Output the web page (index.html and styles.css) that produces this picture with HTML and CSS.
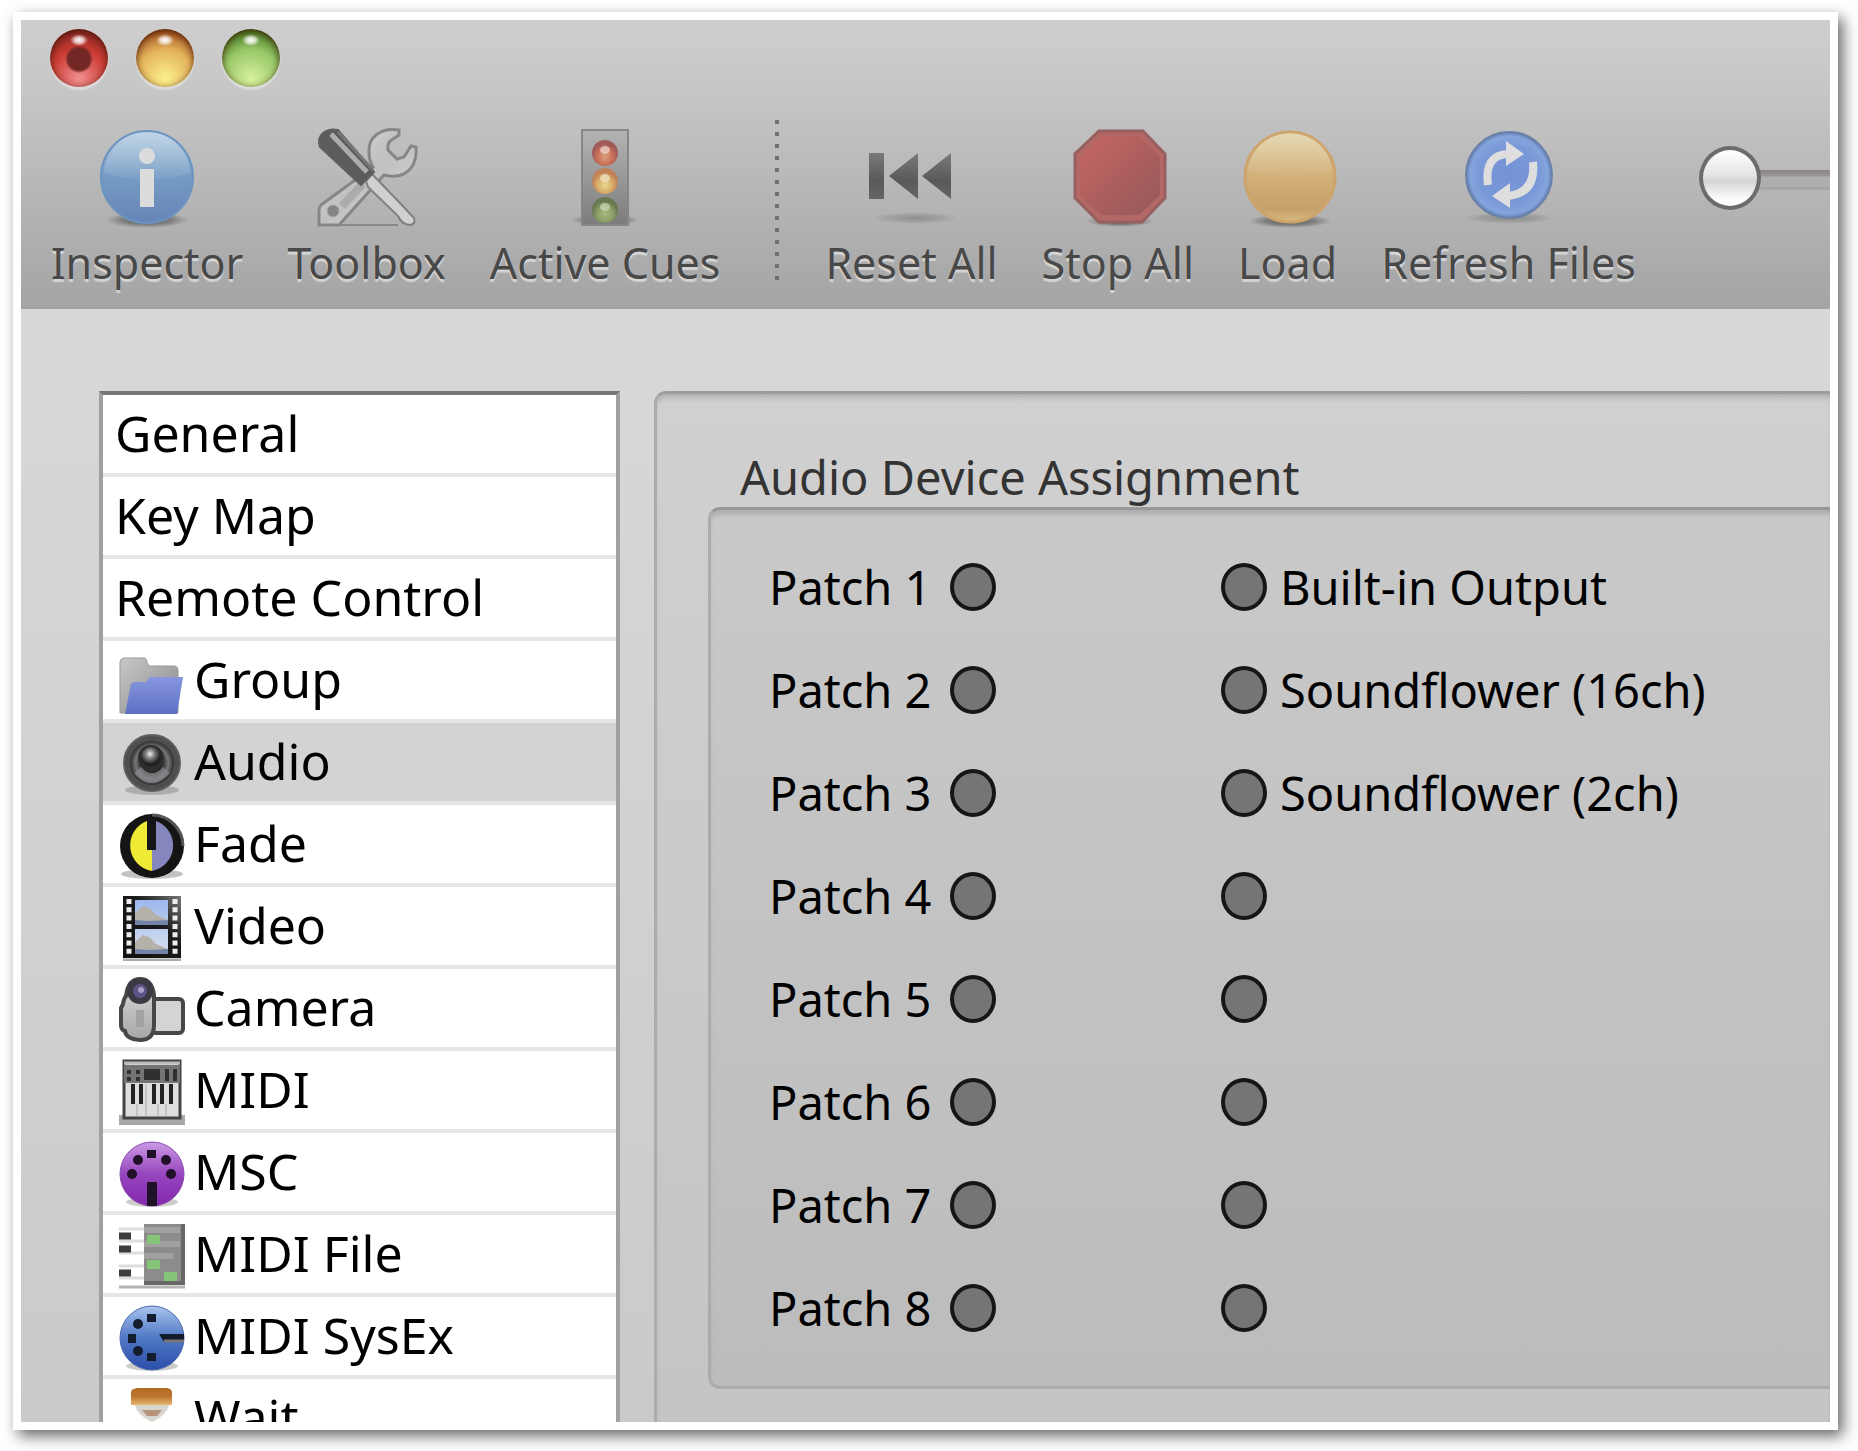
FILE: index.html
```
<!DOCTYPE html>
<html lang="en">
<head>
    <meta charset="UTF-8">
    <meta name="viewport" content="width=device-width, initial-scale=1.0">
    <title>Workspace Preferences</title>
    <link rel="stylesheet" href="styles.css">
</head>
<body>
    <div class="window">
        <header class="chrome">
            <!-- Window buttons -->
            <div class="lights">
                <button class="light red" aria-label="Close"></button>
                <button class="light yellow" aria-label="Minimize"></button>
                <button class="light green" aria-label="Zoom"></button>
            </div>

            <!-- Toolbar -->
            <div class="toolbar">
                <button class="tool">
                    <svg viewBox="0 0 98 98" aria-hidden="true">
                        <defs>
                            <linearGradient id="infoFill" x1="0" y1="0" x2="0" y2="1">
                                <stop offset="0" stop-color="#8fb2d4"/>
                                <stop offset=".5" stop-color="#759cc4"/>
                                <stop offset="1" stop-color="#6684b8"/>
                            </linearGradient>
                            <linearGradient id="gloss" x1="0" y1="0" x2="0" y2="1">
                                <stop offset="0" stop-color="#fff" stop-opacity=".45"/>
                                <stop offset="1" stop-color="#fff" stop-opacity=".05"/>
                            </linearGradient>
                            <radialGradient id="shade">
                                <stop offset="0" stop-color="#333" stop-opacity=".8"/>
                                <stop offset=".6" stop-color="#444" stop-opacity=".45"/>
                                <stop offset="1" stop-color="#555" stop-opacity="0"/>
                            </radialGradient>
                        </defs>
                        <ellipse cx="49" cy="91" rx="42" ry="8" fill="url(#shade)"/>
                        <circle cx="49" cy="48" r="46" fill="url(#infoFill)" stroke="#6c94c0" stroke-width="2"/>
                        <path d="M6 44a43 41 0 0 1 86 0q-43 12-86 0z" fill="url(#gloss)"/>
                        <circle cx="49" cy="27" r="8" fill="#dcdcdc"/>
                        <rect x="42" y="40" width="14" height="38" fill="#dcdcdc"/>
                    </svg>
                    <span>Inspector</span>
                </button>

                <button class="tool">
                    <svg viewBox="0 0 98 98" aria-hidden="true">
                        <defs>
                            <linearGradient id="steel" x1="0" y1="0" x2="1" y2="1">
                                <stop offset="0" stop-color="#dcdcdc"/>
                                <stop offset=".5" stop-color="#c0c0c0"/>
                                <stop offset="1" stop-color="#dadada"/>
                            </linearGradient>
                        </defs>
                        <path d="M20 96h60" stroke="#8a8a8a" stroke-width="2"/>
                        <path d="M81 1C63-2 50 8 51 23q0 9 4 15L3 76q-2 2-2 6v14h20l45-50q20 5 29-10 4-9 3-18l-5-1-7 11-7 2-9-9q-1-5 2-9l9-6z" fill="url(#steel)" stroke="#868686" stroke-width="3"/>
                        <path d="M45 55L24 77" fill="none" stroke="#a2a2a2" stroke-width="8" opacity=".7"/>
                        <circle cx="15" cy="82" r="6" fill="#858585" stroke="#aaa"/>
                        <path d="M48 52l6-7 28 29 14 15q2 5-3 7-9 0-13-9L50 58z" fill="#d0d0d0" stroke="#808080" stroke-width="2"/>
                        <path d="M2 18Q-1 9 5 4t15-3l36 42-13 13z" fill="#5c5c5c" stroke="#606060" stroke-width="2"/>
                        <path d="M13 5l36 38" stroke="#adadad" stroke-width="5"/>
                        <path d="M20 3l35 38" stroke="#777" stroke-width="3"/>
                    </svg>
                    <span>Toolbox</span>
                </button>

                <button class="tool">
                    <svg viewBox="0 0 98 98" aria-hidden="true">
                        <defs>
                            <linearGradient id="signal" x1="0" y1="0" x2="0" y2="1">
                                <stop offset="0" stop-color="#b4b4b4"/>
                                <stop offset="1" stop-color="#7c7c7c"/>
                            </linearGradient>
                            <radialGradient id="lampRed" cy=".65"><stop offset="0" stop-color="#dba07a"/><stop offset=".6" stop-color="#c87058"/><stop offset="1" stop-color="#a05a58"/></radialGradient>
                            <radialGradient id="lampAmber" cy=".65"><stop offset="0" stop-color="#e6d890"/><stop offset=".6" stop-color="#d8ac68"/><stop offset="1" stop-color="#c08058"/></radialGradient>
                            <radialGradient id="lampGreen" cy=".65"><stop offset="0" stop-color="#a8b87c"/><stop offset=".6" stop-color="#8ba068"/><stop offset="1" stop-color="#687850"/></radialGradient>
                        </defs>
                        <ellipse cx="49" cy="91" rx="34" ry="6" fill="url(#shade)"/>
                        <rect x="26" y="1" width="46" height="95" fill="url(#signal)" stroke="#868686" stroke-width="2"/>
                        <circle cx="49" cy="24" r="13" fill="url(#lampRed)"/>
                        <circle cx="49" cy="52" r="13" fill="url(#lampAmber)"/>
                        <circle cx="49" cy="81" r="13" fill="url(#lampGreen)"/>
                        <ellipse cx="49" cy="21" rx="5" ry="4" fill="#eddcd2" opacity=".7"/>
                        <ellipse cx="49" cy="49" rx="5" ry="4" fill="#f1e6c8" opacity=".7"/>
                        <ellipse cx="49" cy="78" rx="5" ry="4" fill="#dde2cc" opacity=".6"/>
                    </svg>
                    <span>Active Cues</span>
                </button>

                <div class="divider"></div>

                <button class="tool">
                    <svg viewBox="0 0 98 98" aria-hidden="true">
                        <defs>
                            <linearGradient id="rewind" x1="0" y1="0" x2="0" y2="1">
                                <stop offset="0" stop-color="#7a7a7a"/>
                                <stop offset=".6" stop-color="#595959"/>
                                <stop offset="1" stop-color="#666"/>
                            </linearGradient>
                        </defs>
                        <ellipse cx="53" cy="89" rx="44" ry="6" fill="url(#shade)" opacity=".35"/>
                        <path d="M7 24h15v46H7zM56 24v46L27 47zM89 24v46L60 47z" fill="url(#rewind)"/>
                    </svg>
                    <span>Reset All</span>
                </button>

                <button class="tool">
                    <svg viewBox="0 0 98 98" aria-hidden="true">
                        <defs>
                            <linearGradient id="stop" x1="0" y1="0" x2="1" y2="1">
                                <stop offset="0" stop-color="#c46664"/>
                                <stop offset=".45" stop-color="#b0605e"/>
                                <stop offset="1" stop-color="#94585a"/>
                            </linearGradient>
                        </defs>
                        <ellipse cx="51" cy="92" rx="34" ry="6" fill="url(#shade)"/>
                        <path d="M30 2h44l22 23v44L73 93H30L6 69V25z" fill="#b46866" stroke="#97605f" stroke-width="3"/>
                        <path d="M32 7h38l21 21v38L70 86H32L11 66V28z" fill="url(#stop)"/>
                    </svg>
                    <span>Stop All</span>
                </button>

                <button class="tool">
                    <svg viewBox="0 0 98 98" aria-hidden="true">
                        <defs>
                            <linearGradient id="loadFill" x1="0" y1="0" x2="0" y2="1">
                                <stop offset="0" stop-color="#dacb96"/>
                                <stop offset=".5" stop-color="#d2b078"/>
                                <stop offset=".85" stop-color="#c6a06c"/>
                                <stop offset="1" stop-color="#d6bc80"/>
                            </linearGradient>
                        </defs>
                        <ellipse cx="51" cy="92" rx="42" ry="7" fill="url(#shade)"/>
                        <circle cx="51" cy="48" r="45" fill="url(#loadFill)" stroke="#cda46c" stroke-width="3"/>
                        <path d="M9 42a42 38 0 0 1 84 0q-42 10-84 0z" fill="url(#gloss)" opacity=".6"/>
                    </svg>
                    <span>Load</span>
                </button>

                <button class="tool">
                    <svg viewBox="0 0 98 98" aria-hidden="true">
                        <defs>
                            <radialGradient id="refreshFill">
                                <stop offset="0" stop-color="#7592d6"/>
                                <stop offset=".7" stop-color="#7a99d8"/>
                                <stop offset=".9" stop-color="#84a4dc"/>
                                <stop offset="1" stop-color="#6380b4"/>
                            </radialGradient>
                        </defs>
                        <ellipse cx="50" cy="89" rx="46" ry="6" fill="url(#shade)" opacity=".4"/>
                        <circle cx="50" cy="46" r="43" fill="url(#refreshFill)" stroke="#6a80a8" stroke-width="2"/>
                        <path d="M29 56Q25 26 49 25M74 33Q77 64 49 67" fill="none" stroke="#dedede" stroke-width="8"/>
                        <path d="M47 12l18 13-18 12zM51 54v25L33 67z" fill="#dedede"/>
                    </svg>
                    <span>Refresh Files</span>
                </button>

                <input class="slider" type="range" min="0" max="100" value="0" aria-label="Size">
            </div>
        </header>

        <main class="content">
            <!-- Cue type list -->
            <nav class="sidebar">
                <a href="#">General</a>
                <a href="#">Key Map</a>
                <a href="#">Remote Control</a>
                <a href="#">
                    <svg viewBox="0 0 66 66" aria-hidden="true">
                        <defs>
                            <linearGradient id="folderBack" x1="0" y1="0" x2="1" y2="1"><stop offset="0" stop-color="#c8c8c8"/><stop offset="1" stop-color="#888"/></linearGradient>
                            <linearGradient id="folderFront" x1="0" y1="0" x2="0" y2="1"><stop offset="0" stop-color="#8796de"/><stop offset="1" stop-color="#5e70c4"/></linearGradient>
                        </defs>
                        <path d="M1 64V13q0-3 4-4h20q3 0 3 5l2 3h26q3 1 3 4v43z" fill="url(#folderBack)" stroke="#999"/>
                        <path d="M6 65l6-30q1-2 5-2h10l4-5h33l-6 37z" fill="url(#folderFront)"/>
                    </svg>
                    <span>Group</span>
                </a>
                <a href="#" class="selected" aria-current="page">
                    <svg viewBox="0 0 66 66" aria-hidden="true">
                        <defs>
                            <radialGradient id="cone"><stop offset="0" stop-color="#666"/><stop offset=".45" stop-color="#222"/><stop offset=".75" stop-color="#777"/><stop offset="1" stop-color="#2c2c2c"/></radialGradient>
                            <radialGradient id="dome" cx=".45" cy=".35"><stop offset="0" stop-color="#eee"/><stop offset=".5" stop-color="#777"/><stop offset="1" stop-color="#222"/></radialGradient>
                        </defs>
                        <ellipse cx="33" cy="59" rx="27" ry="5" fill="#888" opacity=".5"/>
                        <circle cx="33" cy="32" r="28" fill="#4e4e4e" stroke="#5e5e5e" stroke-width="2"/>
                        <circle cx="33" cy="32" r="22" fill="url(#cone)"/>
                        <path d="M15 42q17 20 36 0l-7-6q-11 12-22 0z" fill="#8a8c90" opacity=".7"/>
                        <circle cx="32" cy="27" r="13" fill="#2e2e2e"/>
                        <circle cx="32" cy="26" r="10" fill="url(#dome)"/>
                    </svg>
                    <span>Audio</span>
                </a>
                <a href="#">
                    <svg viewBox="0 0 66 66" aria-hidden="true">
                        <ellipse cx="33" cy="61" rx="31" ry="5" fill="#999" opacity=".6"/>
                        <circle cx="33" cy="33" r="32" fill="#151515"/>
                        <path d="M33 2a31 31 0 0 1 31 31" fill="none" stroke="#555" stroke-width="3"/>
                        <path d="M33 58A26 26 0 0 1 28 8v29h5z" fill="#eeea35"/>
                        <path d="M33 58A26 26 0 0 0 37 8v29h-4z" fill="#8686be"/>
                    </svg>
                    <span>Fade</span>
                </a>
                <a href="#">
                    <svg viewBox="0 0 66 66" aria-hidden="true">
                        <defs>
                            <linearGradient id="film" x1="0" y1="1" x2="1" y2="0"><stop offset="0" stop-color="#111"/><stop offset=".6" stop-color="#1a1a1a"/><stop offset="1" stop-color="#777"/></linearGradient>
                            <linearGradient id="sky" x1="0" y1="0" x2="0" y2="1"><stop offset="0" stop-color="#9db8ee"/><stop offset="1" stop-color="#d8e0ee"/></linearGradient>
                        </defs>
                        <path d="M4 65h58" stroke="#aaa" stroke-width="3"/>
                        <rect x="4" y="1" width="58" height="62" fill="url(#film)"/>
                        <path d="M10 4v58M56 4v58" stroke="#eee" stroke-width="5" stroke-dasharray="5 3.3"/>
                        <path d="M16 5h33v25H16zM16 34h33v25H16z" fill="url(#sky)"/>
                        <path d="M16 24V18l8-7 6 2 7 7 12 5v2H16zM16 53V47l8-7 6 2 7 7 12 5v2H16z" fill="#b4b2a8"/>
                        <path d="M16 25l14 1 19-1v5H16zM16 54l14 1 19-1v5H16z" fill="#7484a8"/>
                    </svg>
                    <span>Video</span>
                </a>
                <a href="#">
                    <svg viewBox="0 0 66 66" aria-hidden="true">
                        <defs>
                            <linearGradient id="camBody" x1="0" y1="0" x2="0" y2="1"><stop offset="0" stop-color="#dadada"/><stop offset="1" stop-color="#a6a6a6"/></linearGradient>
                        </defs>
                        <rect x="33" y="22" width="31" height="34" rx="4" fill="#d4d4d4" stroke="#474747" stroke-width="4"/>
                        <path d="M4 27q1-6 3-8 2-17 14-17t14 16v30q0 15-14 15-14-1-15-9-4-1-4-6V31z" fill="url(#camBody)" stroke="#474747" stroke-width="4"/>
                        <circle cx="21" cy="14" r="13" fill="#3b3a42"/>
                        <circle cx="21" cy="14" r="7" fill="#5c5285"/>
                        <circle cx="22" cy="13" r="3" fill="#a89cc8"/>
                        <rect x="17" y="33" width="8" height="17" fill="#a2a2a2"/>
                    </svg>
                    <span>Camera</span>
                </a>
                <a href="#">
                    <svg viewBox="0 0 66 66" aria-hidden="true">
                        <path d="M0 56h66v10H0z" fill="#a8a8a8"/>
                        <rect x="5" y="2" width="56" height="57" fill="#dedede" stroke="#444" stroke-width="3"/>
                        <path d="M5 6h56v18H5z" fill="#747474"/>
                        <path d="M5 4h56" stroke="#bbb" stroke-width="3"/>
                        <path d="M8 11h4v4H8zM17 11h4v4h-4zM8 18h4v4H8zM17 18h4v4h-4zM25 10h16v11H25zM46 10h4v12h-4zM54 10h4v12h-4z" fill="#303030"/>
                        <path d="M14 25v20M22 25v20M35 25v20M43 25v20M52 25v20" stroke="#222" stroke-width="4"/>
                        <path d="M27 25v32M47 45v12M18 45v12M39 45v12" stroke="#aaa"/>
                    </svg>
                    <span>MIDI</span>
                </a>
                <a href="#">
                    <svg viewBox="0 0 66 66" aria-hidden="true">
                        <defs>
                            <linearGradient id="msc" x1="0" y1="0" x2="0" y2="1"><stop offset="0" stop-color="#cc9ae6"/><stop offset=".5" stop-color="#9646be"/><stop offset="1" stop-color="#8428ae"/></linearGradient>
                        </defs>
                        <ellipse cx="33" cy="61" rx="26" ry="5" fill="#999" opacity=".5"/>
                        <circle cx="33" cy="33" r="32" fill="url(#msc)" stroke="#8a4cae"/>
                        <g fill="#201028">
                            <rect x="28" y="9" width="9" height="8"/>
                            <circle cx="19" cy="19" r="5"/>
                            <circle cx="47" cy="19" r="5"/>
                            <circle cx="13" cy="33" r="5"/>
                            <circle cx="52" cy="33" r="5"/>
                            <path d="M28 41h10v24H28z"/>
                        </g>
                    </svg>
                    <span>MSC</span>
                </a>
                <a href="#">
                    <svg viewBox="0 0 66 66" aria-hidden="true">
                        <path d="M0 6h25M0 18h25M0 30h25M0 43h25M0 55h25" stroke="#ddd" stroke-width="3"/>
                        <path d="M0 13h12M0 26h12M0 50h12" stroke="#3c3c3c" stroke-width="7"/>
                        <path d="M0 64h66" stroke="#b4b4b4" stroke-width="3"/>
                        <path d="M25 1h41v61H25z" fill="#8c8c8c"/>
                        <path d="M25 4h36v6H25zM25 18h36v6H25zM25 30h30v6H25z" fill="#a0a0a0"/>
                        <path d="M25 60h41M64 1v60" stroke="#686868" stroke-width="4"/>
                        <path d="M28 12h13v9H28zM28 37h13v9H28zM45 49h13v9H45z" fill="#86c478"/>
                    </svg>
                    <span>MIDI File</span>
                </a>
                <a href="#">
                    <svg viewBox="0 0 66 66" aria-hidden="true">
                        <defs>
                            <linearGradient id="sysex" x1="0" y1="0" x2="0" y2="1"><stop offset="0" stop-color="#a8c4ee"/><stop offset=".5" stop-color="#5078c4"/><stop offset="1" stop-color="#2c4eaa"/></linearGradient>
                        </defs>
                        <ellipse cx="33" cy="61" rx="26" ry="5" fill="#999" opacity=".5"/>
                        <circle cx="33" cy="33" r="32" fill="url(#sysex)" stroke="#4a6cae"/>
                        <g fill="#141c30">
                            <rect x="28" y="9" width="9" height="8"/>
                            <circle cx="19" cy="19" r="5"/>
                            <rect x="9" y="29" width="8" height="9"/>
                            <circle cx="19" cy="46" r="5"/>
                            <rect x="28" y="48" width="9" height="8"/>
                            <path d="M40 29h25v8H45z"/>
                        </g>
                        <path d="M45 36h20" stroke="#777" stroke-width="3"/>
                    </svg>
                    <span>MIDI SysEx</span>
                </a>
                <a href="#">
                    <svg viewBox="0 0 66 66" aria-hidden="true">
                        <defs>
                            <linearGradient id="wood" x1="0" y1="0" x2="0" y2="1"><stop offset="0" stop-color="#b06a20"/><stop offset=".5" stop-color="#bc7630"/><stop offset="1" stop-color="#e8b870"/></linearGradient>
                        </defs>
                        <path d="M16 18h34q-2 10-17 17-15-7-17-17z" fill="#d8d4d0"/>
                        <path d="M23 23h20l-5 6H28z" fill="#b49478"/>
                        <path d="M12 5q0-3 6-4h30q5 1 5 4v13H12z" fill="url(#wood)"/>
                        <path d="M33 34L14 54v10h38V54z" fill="#d8d4d0"/>
                    </svg>
                    <span>Wait</span>
                </a>
            </nav>

            <!-- Settings of the selected cue type -->
            <section class="panel">
                <h1>Audio Device Assignment</h1>
                <div class="patch-box">
                    <div class="patch"><span>Patch 1</span><button aria-label="Patch 1"></button><button aria-label="Output 1"></button><span>Built-in Output</span></div>
                    <div class="patch"><span>Patch 2</span><button aria-label="Patch 2"></button><button aria-label="Output 2"></button><span>Soundflower (16ch)</span></div>
                    <div class="patch"><span>Patch 3</span><button aria-label="Patch 3"></button><button aria-label="Output 3"></button><span>Soundflower (2ch)</span></div>
                    <div class="patch"><span>Patch 4</span><button aria-label="Patch 4"></button><button aria-label="Output 4"></button></div>
                    <div class="patch"><span>Patch 5</span><button aria-label="Patch 5"></button><button aria-label="Output 5"></button></div>
                    <div class="patch"><span>Patch 6</span><button aria-label="Patch 6"></button><button aria-label="Output 6"></button></div>
                    <div class="patch"><span>Patch 7</span><button aria-label="Patch 7"></button><button aria-label="Output 7"></button></div>
                    <div class="patch"><span>Patch 8</span><button aria-label="Patch 8"></button><button aria-label="Output 8"></button></div>
                </div>
            </section>
        </main>
    </div>
</body>
</html>
```

FILE: styles.css
```
* {
    margin: 0;
    padding: 0;
    box-sizing: border-box;
}
body {
    height: 100vh;
    padding: 12px 20px 21px 13px;
    background: #fff;
    font-family: "Noto Sans", "Open Sans", sans-serif;
    overflow: hidden;
}
button {
    border: none;
    background: none;
    font-family: inherit;
}
.window {
    height: 100%;
    border: 8px solid #fff;
    background: linear-gradient(#d8d8d8 289px, #cacaca);
    box-shadow: 5px 6px 14px rgba(0, 0, 0, 0.6);
    overflow: hidden;
    display: flex;
    flex-direction: column;
}

/* Title bar and toolbar */
.chrome {
    flex: none;
    height: 289px;
    padding: 9px 29px 0;
    background: linear-gradient(#cecece, #c8c8c8 20%, #a4a4a4);
}
.lights {
    display: flex;
    gap: 28px;
    margin-bottom: 42px;
}
.light {
    width: 58px;
    height: 58px;
    border-radius: 50%;
    box-shadow: inset 0 2px 7px rgba(60, 20, 0, 0.8), 0 3px 2px rgba(255, 255, 255, 0.4);
}
.red {
    background:
        radial-gradient(ellipse 9px 6px at 50% 19%, #fff, rgba(255, 255, 255, 0.7) 50%, transparent),
        radial-gradient(circle at 50% 52%, #742826 11px, transparent 14px),
        radial-gradient(circle at 50% 85%, #f09090, #cc3c34 50%, #6c1c1c);
}
.yellow {
    background:
        radial-gradient(ellipse 9px 6px at 50% 19%, #fff, rgba(255, 255, 255, 0.7) 50%, transparent),
        radial-gradient(circle at 50% 85%, #fbf08c, #e4b45c 50%, #9c4418 90%);
}
.green {
    background:
        radial-gradient(ellipse 9px 6px at 50% 19%, #fff, rgba(255, 255, 255, 0.7) 50%, transparent),
        radial-gradient(circle at 50% 85%, #d8f09c, #98c868 50%, #3c6c18 90%);
}
.toolbar {
    display: flex;
    gap: 44px;
    padding-left: 1px;
}
.tool {
    flex: none;
    display: flex;
    flex-direction: column;
    align-items: center;
    gap: 12px;
    font-size: 43px;
    line-height: 48px;
    color: #484848;
    text-shadow: 0 3px 1px rgba(255, 255, 255, 0.5);
}
.tool svg {
    width: 98px;
    height: 98px;
    overflow: visible;
}
.divider {
    flex: none;
    width: 4px;
    height: 168px;
    margin: -9px 2px 0 11px;
    background: repeating-linear-gradient(#707070 0 4px, transparent 4px 12px);
}
.slider {
    flex: none;
    width: 320px;
    height: 64px;
    margin: 17px 0 0 19px;
    appearance: none;
    -webkit-appearance: none;
    background: linear-gradient(transparent 24px, #8a8686 24px, #9a9696 30px, #b0aeae 31px, #aeaeae 41px, #a09e9e 42px, transparent 45px) no-repeat 10px 0;
}
.slider::-webkit-slider-thumb {
    -webkit-appearance: none;
    width: 62px;
    height: 64px;
    border: 4px solid #6c6c6c;
    border-radius: 50%;
    background: linear-gradient(#fff, #e4e4e4 45%, #d4d4d4 55%, #fff 90%);
}

/* Preferences body */
.content {
    flex: 1;
    min-height: 0;
    display: grid;
    grid-template-columns: 521px 1fr;
    grid-template-rows: max-content;
    gap: 34px;
    padding: 82px 0 0 78px;
}
.sidebar {
    border: 4px solid #a0a0a0;
    border-top-color: #767676;
    background: #fff;
}
.sidebar a {
    display: flex;
    gap: 9px;
    height: 82px;
    padding: 8px 12px 0;
    border-bottom: 4px solid #e6e6e6;
    font-size: 50px;
    line-height: 60px;
    color: #000;
    text-decoration: none;
}
.sidebar a.selected {
    background: #d3d3d3;
}
.sidebar svg {
    width: 66px;
    height: 66px;
    margin-left: 4px;
}
.panel {
    padding: 53px 0 60px 51px;
    border: 3px solid #acacac;
    border-top-color: #9c9c9c;
    border-right: none;
    border-radius: 12px 0 0 12px;
    background: linear-gradient(#d0d0d0, #c4c4c4);
    box-shadow: inset 0 6px 5px -2px rgba(0, 0, 0, 0.15);
}
.panel h1 {
    padding-left: 32px;
    font-size: 47px;
    font-weight: normal;
    line-height: 60px;
    color: #333;
}
.patch-box {
    padding: 25px 0 27px 58px;
    border: 3px solid #acacac;
    border-top-color: #989898;
    border-right: none;
    border-radius: 12px 0 0 12px;
    background: linear-gradient(#c9c9c9, #bcbcbc);
    box-shadow: inset 0 6px 5px -2px rgba(0, 0, 0, 0.15);
}
.patch {
    display: grid;
    grid-template-columns: 181px 271px 59px 1fr;
    align-items: center;
    height: 103px;
    font-size: 47px;
}
.patch button {
    width: 46px;
    height: 48px;
    border: 4px solid #161616;
    border-radius: 50%;
    background: #757575;
}
```
